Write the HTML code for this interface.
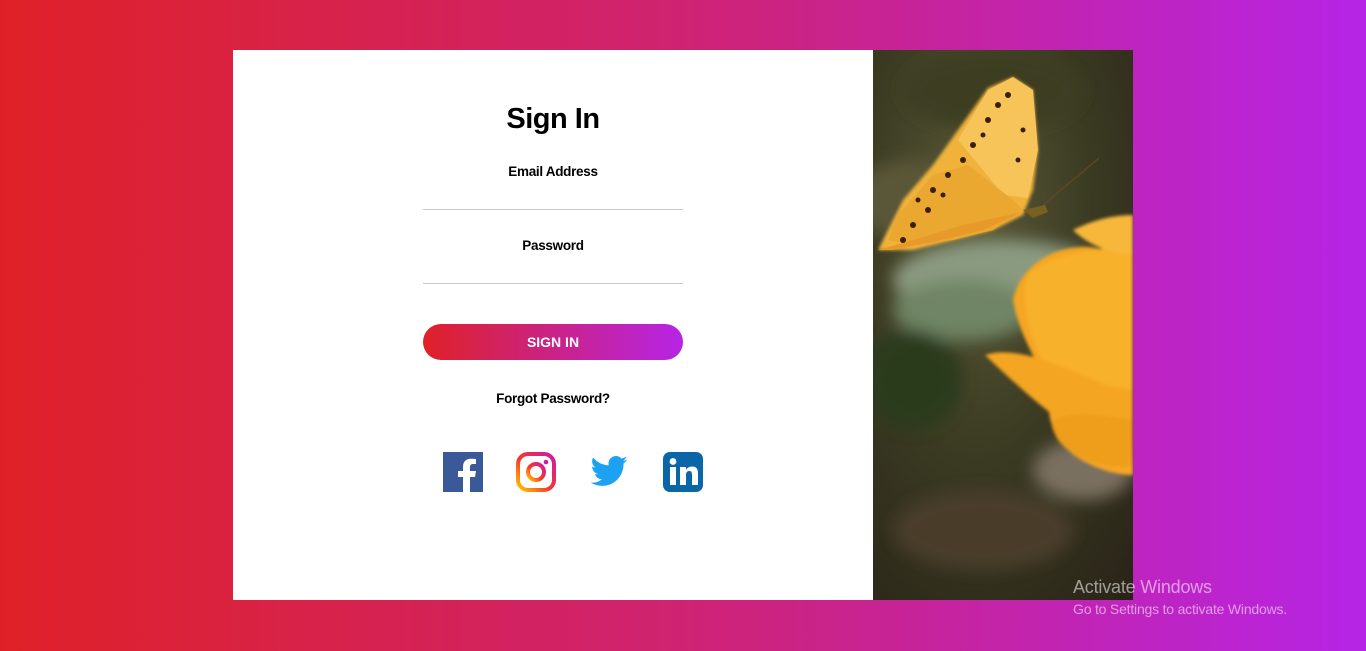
<!DOCTYPE html>
<html><head><meta charset="utf-8"><style>
html,body{margin:0;padding:0}
body{width:1366px;height:651px;background:linear-gradient(90deg,#df2127 0%,#cf2372 50%,#b624e6 100%);position:relative;overflow:hidden;font-family:"Liberation Sans",sans-serif}
.card{position:absolute;left:233px;top:50px;width:640px;height:550px;background:#fff}
.photo{position:absolute;left:873px;top:50px;width:260px;height:550px;overflow:hidden}
h1{position:absolute;left:0;width:640px;margin:0;text-align:center;font-size:29px;font-weight:bold;color:#000;top:53px;letter-spacing:-0.5px}
.lbl{position:absolute;width:640px;left:0;text-align:center;font-size:13.5px;font-weight:bold;color:#000;letter-spacing:-0.3px}
.line{position:absolute;left:190px;width:260px;height:1px;background:#c8c8c8}
.btn{position:absolute;left:190px;top:274px;width:260px;height:36px;border-radius:18px;background:linear-gradient(90deg,#df2127,#b624e6);color:#fff;font-weight:bold;font-size:14px;text-align:center;line-height:36px}
.ic{position:absolute;top:402px;width:40px;height:40px}
.wm{position:absolute;left:1073px;color:rgba(255,255,255,.55)}
</style></head><body>
<div class="card">
<h1>Sign In</h1>
<div class="lbl" style="top:114px">Email Address</div>
<div class="line" style="top:159px"></div>
<div class="lbl" style="top:188px">Password</div>
<div class="line" style="top:233px"></div>
<div class="btn">SIGN IN</div>
<div class="lbl" style="top:341px">Forgot Password?</div>
<svg class="ic" style="left:210px" viewBox="0 0 40 40"><rect width="40" height="40" fill="#3b5998"/><path d="M27 40V25h5l1-6h-6v-4c0-2 1-3 3-3h3V7c-1 0-3-.3-5-.3-5 0-8 3-8 8V19h-5v6h5v15z" fill="#fff"/></svg>
<svg class="ic" style="left:283px" viewBox="0 0 40 40"><defs><linearGradient id="ig" x1="0" y1="1" x2="1" y2="0"><stop offset="0" stop-color="#fdc800"/><stop offset=".45" stop-color="#f9372a"/><stop offset="1" stop-color="#c81ea5"/></linearGradient></defs><rect x="2" y="2" width="36" height="36" rx="10" fill="none" stroke="url(#ig)" stroke-width="4"/><circle cx="20" cy="20" r="8" fill="none" stroke="url(#ig)" stroke-width="4"/><circle cx="30" cy="10" r="2.3" fill="#c81ea5"/></svg>
<svg class="ic" style="left:356px" viewBox="0 0 24 24"><path fill="#1da1f2" d="M23 4.6a9 9 0 0 1-2.6.7 4.6 4.6 0 0 0 2-2.5 9 9 0 0 1-2.9 1.1 4.5 4.5 0 0 0-7.7 4.1A12.8 12.8 0 0 1 2.5 3.3a4.5 4.5 0 0 0 1.4 6 4.5 4.5 0 0 1-2-.6 4.5 4.5 0 0 0 3.6 4.5 4.5 4.5 0 0 1-2 .1 4.5 4.5 0 0 0 4.2 3.1A9 9 0 0 1 1 18.3a12.8 12.8 0 0 0 6.9 2c8.3 0 12.8-6.9 12.8-12.8v-.6A9 9 0 0 0 23 4.6z"/></svg>
<svg class="ic" style="left:430px" viewBox="0 0 40 40"><rect width="40" height="40" rx="7" fill="#0a66a8"/><rect x="7" y="15" width="6" height="18" fill="#fff"/><circle cx="10" cy="9.5" r="3.4" fill="#fff"/><path d="M17 15h6v3c1-2 3-3.5 6-3.5 5 0 6 3 6 7.5v11h-6V23c0-2.5-.5-4-2.7-4-2.3 0-3.3 1.6-3.3 4v10h-6z" fill="#fff"/></svg>
</div>
<div class="photo"><svg width="260" height="550" viewBox="0 0 260 550">
<defs><radialGradient id="bg" cx=".4" cy=".3" r=".9"><stop offset="0" stop-color="#5b5a38"/><stop offset=".5" stop-color="#3a3a22"/><stop offset="1" stop-color="#2a2418"/></radialGradient>
<filter id="bl"><feGaussianBlur stdDeviation="8"/></filter><filter id="b2"><feGaussianBlur stdDeviation="1.5"/></filter></defs>
<rect width="260" height="550" fill="url(#bg)"/>
<g filter="url(#bl)"><ellipse cx="40" cy="150" rx="60" ry="40" fill="#5a5638"/><ellipse cx="130" cy="230" rx="110" ry="40" fill="#8a9a80"/><ellipse cx="90" cy="260" rx="70" ry="30" fill="#6f8565"/><ellipse cx="40" cy="330" rx="50" ry="50" fill="#2c3a1e"/><ellipse cx="210" cy="420" rx="50" ry="30" fill="#7a7060"/><ellipse cx="110" cy="480" rx="90" ry="40" fill="#4a3e2c"/><ellipse cx="120" cy="40" rx="90" ry="40" fill="#3c3e22"/></g>
<path d="M5 200 30 150 60 115 85 80 115 38 140 27 160 40 165 100 160 140 150 165 120 180 80 190 40 200 10 200Z" fill="#f0b23a" filter="url(#b2)"/>
<path d="M85 90 115 40 140 27 160 40 165 100 155 148 130 145 110 120Z" fill="#f7c45a"/>
<path d="M25 165 60 125 95 115 140 150 150 160 120 180 80 190 40 195 15 190Z" fill="#eaa830"/>
<path d="M5 200 40 190 90 175 150 162 110 180 60 192 20 200Z" fill="#e79a2a"/>
<g fill="#3a1e0c"><circle cx="40" cy="175" r="3"/><circle cx="55" cy="160" r="3"/><circle cx="60" cy="140" r="3"/><circle cx="75" cy="125" r="3"/><circle cx="90" cy="110" r="3"/><circle cx="100" cy="95" r="3"/><circle cx="115" cy="70" r="3"/><circle cx="125" cy="55" r="3"/><circle cx="135" cy="45" r="3"/><circle cx="45" cy="150" r="2.5"/><circle cx="30" cy="190" r="3"/><circle cx="70" cy="145" r="2.5"/><circle cx="110" cy="85" r="2.5"/><circle cx="150" cy="80" r="2.5"/><circle cx="145" cy="110" r="2.5"/></g>
<path d="M150 160 172 155 175 162 160 168Z" fill="#7a6020"/>
<line x1="170" y1="155" x2="226" y2="108" stroke="#6a4a20" stroke-width="1"/>
<g filter="url(#b2)">
<path d="M140 250c10-45 60-60 90-50l30-10v235c-30 0-70-20-75-40-10-10-10-30-10-50-15-30-30-55-35-85z" fill="#f5a623"/>
<path d="M155 225c20-20 60-25 105-30v150c-40 10-90-15-100-55-10-30-10-50-5-65z" fill="#f8b12c"/>
<path d="M112 305c30-10 75 10 120 30l28 5v60c-40 0-80-30-148-95z" fill="#f4a620"/>
<path d="M180 370c20-10 50-5 80 0v45c-25 5-60-5-75-25-5-10-8-15-5-20z" fill="#ef9e1e"/>
<path d="M200 180c20-10 40-15 60-15v40c-20 0-45-10-60-25z" fill="#f6b73a"/>
</g>
</svg></div>
<div class="wm" style="top:577px;font-size:18px;letter-spacing:-0.2px">Activate Windows</div>
<div class="wm" style="top:601px;font-size:14px;letter-spacing:-0.2px">Go to Settings to activate Windows.</div>
</body></html>
